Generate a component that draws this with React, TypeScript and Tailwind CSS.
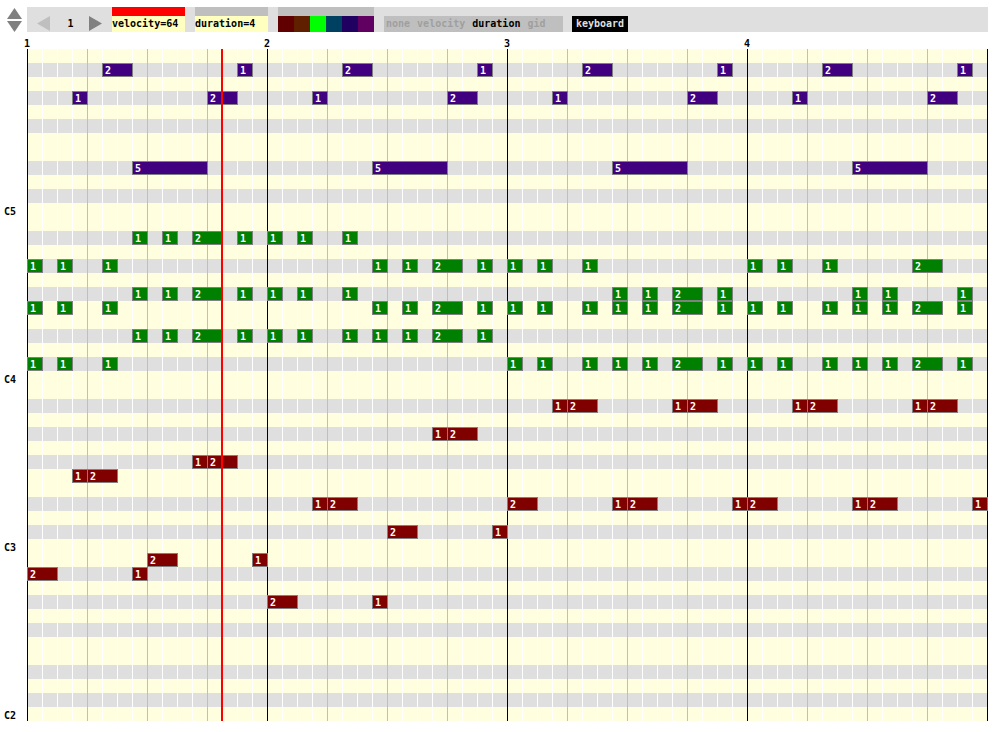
import React from "react";

const OCTAVES = ["C5", "C4", "C3", "C2"];
const BARS = [1, 2, 3, 4];
const ROW_COUNT = 48;
const STEP_COUNT = 64;
const BLACK_KEYS = [1, 3, 6, 8, 10];
const PLAYHEAD_STEP = 12.94;

type Voice = "bell" | "chord" | "bass";

const VOICE_CLASS: Record<Voice, string> = {
  bell: "bg-[#400080]",
  chord: "bg-[#008000]",
  bass: "bg-[#800000]",
};

// Each entry is "start" (one step long) or "start:length".
const TRACKS: { row: number; voice: Voice; notes: string }[] = [
  { row: 1, voice: "bell", notes: "5:2 14 21:2 30 37:2 46 53:2 62" },
  { row: 3, voice: "bell", notes: "3 12:2 19 28:2 35 44:2 51 60:2" },
  { row: 8, voice: "bell", notes: "7:5 23:5 39:5 55:5" },
  { row: 13, voice: "chord", notes: "7 9 11:2 14 16 18 21" },
  { row: 15, voice: "chord", notes: "0 2 5 23 25 27:2 30 32 34 37 48 50 53 59:2" },
  { row: 17, voice: "chord", notes: "7 9 11:2 14 16 18 21 39 41 43:2 46 55 57 62" },
  { row: 18, voice: "chord", notes: "0 2 5 23 25 27:2 30 32 34 37 39 41 43:2 46 48 50 53 55 57 59:2 62" },
  { row: 20, voice: "chord", notes: "7 9 11:2 14 16 18 21 23 25 27:2 30" },
  { row: 22, voice: "chord", notes: "0 2 5 32 34 37 39 41 43:2 46 48 50 53 55 57 59:2 62" },
  { row: 25, voice: "bass", notes: "35 36:2 43 44:2 51 52:2 59 60:2" },
  { row: 27, voice: "bass", notes: "27 28:2" },
  { row: 29, voice: "bass", notes: "11 12:2" },
  { row: 30, voice: "bass", notes: "3 4:2" },
  { row: 32, voice: "bass", notes: "19 20:2 32:2 39 40:2 47 48:2 55 56:2 63" },
  { row: 34, voice: "bass", notes: "24:2 31" },
  { row: 36, voice: "bass", notes: "8:2 15" },
  { row: 37, voice: "bass", notes: "0:2 7" },
  { row: 39, voice: "bass", notes: "16:2 23" },
];

const NOTES = TRACKS.flatMap(({ row, voice, notes }) =>
  notes.split(" ").map((entry) => {
    const [start, length = "1"] = entry.split(":");
    return { row, voice, start: Number(start), length: Number(length) };
  }),
);

const SWATCHES = [
  { name: "red", className: "bg-[#600000]" },
  { name: "brown", className: "bg-[#602000]" },
  { name: "green", className: "bg-[#00ff00]" },
  { name: "teal", className: "bg-[#004060]" },
  { name: "indigo", className: "bg-[#200060]" },
  { name: "purple", className: "bg-[#600060]" },
];

const MODES = ["none", "velocity", "duration", "gid"];

function lineClass(step: number) {
  if (step % 16 === 0) return "border-l border-black";
  if (step % 4 === 0) return "border-l border-[#bfbfbf]";
  return "border-l border-white";
}

function Triangle({ points, box, className }: { points: string; box: string; className: string }) {
  return (
    <svg viewBox={box} className={className} fill="currentColor" aria-hidden="true">
      <polygon points={points} />
    </svg>
  );
}

function Field({ name, value, barClass }: { name: string; value: string; barClass: string }) {
  return (
    <label className="flex w-[73px] flex-col">
      <span className={`h-[9px] ${barClass}`} />
      <input
        aria-label={name}
        defaultValue={value}
        className="h-4 w-full bg-[#ffffbf] p-0 leading-4 outline-none"
      />
    </label>
  );
}

function Toolbar() {
  return (
    <header className="flex pt-[7px] pr-1.5">
      <div className="flex w-[27px] shrink-0 flex-col items-center gap-[2px] pt-px pl-[2px] text-[#808080]">
        <button aria-label="Octave up">
          <Triangle box="0 0 15 11" points="7.5,0 15,11 0,11" className="block h-[11px] w-[15px]" />
        </button>
        <button aria-label="Octave down">
          <Triangle box="0 0 15 11" points="0,0 15,0 7.5,11" className="block h-[11px] w-[15px]" />
        </button>
      </div>
      <div className="flex h-[25px] flex-1 items-end bg-[#dfdfdf]">
        <div className="flex w-[85px] items-center justify-between px-2.5">
          <button aria-label="Previous pattern" className="text-[#bfbfbf]">
            <Triangle box="0 0 13 15" points="13,0 13,15 0,7.5" className="mb-px block h-[15px] w-[13px]" />
          </button>
          <span className="w-2 text-right">1</span>
          <button aria-label="Next pattern" className="text-[#808080]">
            <Triangle box="0 0 13 15" points="0,0 13,7.5 0,15" className="mb-px block h-[15px] w-[13px]" />
          </button>
        </div>
        <div className="flex items-end gap-2.5">
          <Field name="Velocity" value="velocity=64" barClass="bg-[#ff0000]" />
          <Field name="Duration" value="duration=4" barClass="bg-[#bfbfbf]" />
          <div className="w-24">
            <div className="h-[9px] bg-[#bfbfbf]" />
            <div className="flex">
              {SWATCHES.map((s) => (
                <button key={s.name} aria-label={s.name} className={`size-4 ${s.className}`} />
              ))}
            </div>
          </div>
          <div className="flex h-4 w-[179px] gap-[7px] bg-[#bfbfbf] px-0.5">
            {MODES.map((mode) => (
              <button
                key={mode}
                aria-pressed={mode === "duration"}
                className={`leading-[14px] ${mode === "duration" ? "text-black" : "text-[#9f9f9f]"}`}
              >
                {mode}
              </button>
            ))}
          </div>
        </div>
        <button className="ml-[9px] h-4 w-14 bg-black leading-[14px] text-[#dfdfdf]">keyboard</button>
      </div>
    </header>
  );
}

function PianoRoll() {
  return (
    <main className="flex pr-1.5">
      <div className="grid w-[27px] shrink-0 grid-rows-4 pl-1">
        {OCTAVES.map((octave) => (
          <div key={octave} className="flex h-[168px] items-end leading-[10px]">
            {octave}
          </div>
        ))}
      </div>
      <div className="relative flex-1 border-r border-black">
        {Array.from({ length: ROW_COUNT }, (_, row) => (
          <div
            key={row}
            className={`h-3.5 ${BLACK_KEYS.includes((ROW_COUNT - 1 - row) % 12) ? "bg-[#dfdfdf]" : "bg-[#ffffdf]"}`}
          />
        ))}
        <div className="absolute inset-0 grid grid-cols-[repeat(64,minmax(0,1fr))]">
          {Array.from({ length: STEP_COUNT }, (_, step) => (
            <div key={step} className={lineClass(step)} />
          ))}
        </div>
        <div className="absolute inset-0 grid grid-cols-[repeat(64,minmax(0,1fr))] grid-rows-[repeat(48,14px)]">
          {NOTES.map((note) => (
            <div
              key={`${note.row}-${note.start}`}
              className={`-mr-px border border-[#808080] pl-0.5 leading-[14px] text-white ${VOICE_CLASS[note.voice]}`}
              style={{
                gridRow: note.row + 1,
                gridColumn: `${note.start + 1} / span ${note.length}`,
              }}
            >
              {note.length}
            </div>
          ))}
        </div>
        <div
          className="absolute inset-y-0 w-0.5 bg-[#ff0000]"
          style={{ left: `${(PLAYHEAD_STEP / STEP_COUNT) * 100}%` }}
        />
      </div>
    </main>
  );
}

export default function App() {
  return (
    <div className="bg-white pb-3 font-['DejaVu_Sans_Mono',monospace] text-[10px] leading-4 font-bold text-black">
      <Toolbar />
      <div className="grid h-[17px] grid-cols-4 pt-1 pr-2.5 pl-6">
        {BARS.map((bar) => (
          <span key={bar}>{bar}</span>
        ))}
      </div>
      <PianoRoll />
    </div>
  );
}
